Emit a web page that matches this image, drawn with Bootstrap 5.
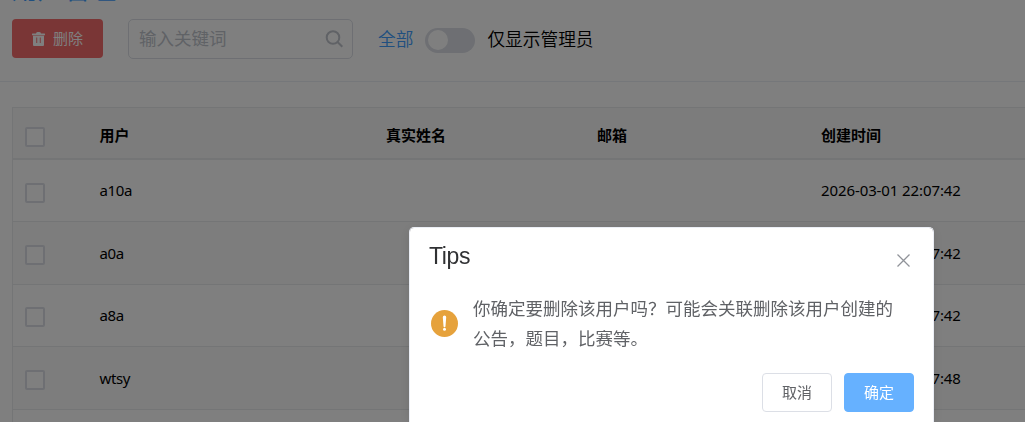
<!DOCTYPE html>
<html lang="zh-CN">
<head>
    <meta charset="UTF-8">
    <meta name="viewport" content="width=device-width, initial-scale=1.0">
    <title>用户管理</title>
    <link href="https://cdn.jsdelivr.net/npm/bootstrap@5.3.2/dist/css/bootstrap.min.css" rel="stylesheet">
    <style>
        body {
            font-family: "Noto Sans", "Noto Sans CJK SC", sans-serif;
            font-size: 15px;
            color: #000;
            height: 422px;
            overflow: hidden;
        }
        .panel-head {
            height: 82px;
            overflow: hidden;
            border-bottom: 1px solid #ebeef5;
            padding-left: 12px;
        }
        .panel-title {
            font-family: "Noto Sans CJK SC", sans-serif;
            font-size: 26px;
            font-weight: 400;
            line-height: 30px;
            margin: -27px 0 16px;
            color: #409eff;
        }
        .btn-del {
            width: 91px;
            height: 39px;
            margin-right: 25px;
            padding: 0;
            font-size: 15px;
            border-radius: 4px;
            color: #fff;
            background-color: #f56c6c;
        }
        .search-box {
            width: 225px;
            height: 40px;
            margin-right: 25px;
            padding: 0 8px 2px 10px;
            border: 1px solid #dcdfe6;
            border-radius: 5px;
            font-size: 17.5px;
            color: #c0c4cc;
        }
        .switch-label {
            font-size: 17.7px;
            font-weight: 350;
            line-height: 40px;
        }
        .switch-label.all {
            color: #409eff;
        }
        .switch-core {
            width: 50px;
            height: 25px;
            margin: 2px 12px 0;
            padding: 2px 3px;
            border-radius: 13px;
            background-color: #dcdfe6;
        }
        .switch-knob {
            width: 20px;
            height: 20px;
            border-radius: 50%;
            background-color: #fff;
        }
        .user-table {
            margin: 25px 0 0 12px;
            border-top: 1px solid #e8eaec;
            border-left: 1px solid #e8eaec;
        }
        .user-row {
            height: 62.4px;
            border-bottom: 1px solid #e8eaec;
            background-color: #fff;
        }
        .user-row.striped {
            background-color: #fafafa;
        }
        .user-row.head {
            height: 52px;
            padding-top: 4px;
            border-bottom: 2px solid #e8eaec;
            background-color: #f8f8f9;
            font-weight: 700;
        }
        .user-row.last {
            height: 13px;
            border-bottom: 0;
        }
        .cell-check { width: 86.5px; padding: 4px 0 0 12px; }
        .cell-name { width: 286.5px; letter-spacing: -.4px; }
        .head .cell-name { letter-spacing: 0; }
        .cell-real { width: 211px; }
        .cell-mail { width: 224px; }
        .cell-time { letter-spacing: -.1px; }
        .check-inner {
            display: block;
            width: 20px;
            height: 20px;
            border: 2px solid #dcdfe6;
            border-radius: 2px;
            background-color: #fff;
        }
        .tips-dialog {
            width: 525px;
            max-width: 525px;
            margin: 227px 0 0 409px;
        }
        .tips-content {
            height: 195px;
            border: 1px solid #ebeef5;
            border-bottom: 0;
            border-radius: 5px 5px 0 0;
            box-shadow: 0 2px 12px rgba(0,0,0,0.1);
            color: #606266;
        }
        .tips-head {
            padding: 14px 23px 0 19px;
        }
        .tips-title {
            font-family: "Liberation Sans", sans-serif;
            font-size: 23px;
            font-weight: 400;
            line-height: 28px;
            letter-spacing: -.4px;
            color: #303133;
        }
        .tips-close {
            margin-top: 10px;
            overflow: visible;
        }
        .tips-body {
            padding: 23px 34px 0 21px;
        }
        .tips-text {
            font-family: "Noto Sans CJK SC", sans-serif;
            font-size: 17.5px;
            line-height: 30px;
            padding-left: 15px;
        }
        .tips-foot {
            padding: 20px 19px 0 0;
            gap: 12px;
        }
        .btn-tips {
            width: 70px;
            height: 39px;
            padding: 0;
            font-size: 15px;
            border-radius: 4px;
            border: 1px solid #dcdfe6;
            color: #606266;
        }
        .btn-tips.ok {
            color: #fff;
            background-color: #66b1ff;
            border-color: #66b1ff;
        }
    </style>
</head>
<body>
    <div class="panel-head">
        <h1 class="panel-title">用户管理</h1>
        <div class="d-flex">
            <button class="btn btn-del d-flex align-items-center justify-content-center">
                <svg width="13" height="14" viewBox="0 0 13 14" class="me-2" fill="#fff">
                    <path fill-rule="evenodd" d="M4 1.500Q4 0 5.500 0h2Q9 0 9 1.500h3.500q.5 0 .5.500v1.200H0V2q0-.5.5-.5zM1 3.800h11V13q0 1-1 1H2q-1 0-1-1zM4.300 5.500v5.500h.9V5.500zM7.800 5.500v5.500h.9V5.500z"/>
                </svg>
                删除
            </button>
            <div class="search-box d-flex align-items-center justify-content-between">
                <span>输入关键词</span>
                <svg width="19" height="19" viewBox="0 0 19 19" fill="none" stroke="#c0c4cc" stroke-width="2">
                    <circle cx="8" cy="8.500" r="6.300"/>
                    <path d="M12.500 13l4.800 4.800"/>
                </svg>
            </div>
            <div class="d-flex align-items-center">
                <span class="switch-label all">全部</span>
                <span class="switch-core"><span class="switch-knob d-block"></span></span>
                <span class="switch-label">仅显示管理员</span>
            </div>
        </div>
    </div>

    <div class="user-table">
        <div class="user-row head d-flex align-items-center">
            <div class="cell-check"><span class="check-inner"></span></div>
            <div class="cell-name">用户</div>
            <div class="cell-real">真实姓名</div>
            <div class="cell-mail">邮箱</div>
            <div>创建时间</div>
        </div>
        <div class="user-row d-flex align-items-center">
            <div class="cell-check"><span class="check-inner"></span></div>
            <div class="cell-name">a10a</div>
            <div class="cell-real"></div>
            <div class="cell-mail"></div>
            <div class="cell-time">2026-03-01 22:07:42</div>
        </div>
        <div class="user-row striped d-flex align-items-center">
            <div class="cell-check"><span class="check-inner"></span></div>
            <div class="cell-name">a0a</div>
            <div class="cell-real"></div>
            <div class="cell-mail"></div>
            <div class="cell-time">2026-03-01 22:07:42</div>
        </div>
        <div class="user-row d-flex align-items-center">
            <div class="cell-check"><span class="check-inner"></span></div>
            <div class="cell-name">a8a</div>
            <div class="cell-real"></div>
            <div class="cell-mail"></div>
            <div class="cell-time">2026-03-01 22:07:42</div>
        </div>
        <div class="user-row striped d-flex align-items-center">
            <div class="cell-check"><span class="check-inner"></span></div>
            <div class="cell-name">wtsy</div>
            <div class="cell-real"></div>
            <div class="cell-mail"></div>
            <div class="cell-time">2026-03-01 22:07:48</div>
        </div>
        <div class="user-row last"></div>
    </div>

    <div class="modal-backdrop show"></div>
    <div class="modal d-block overflow-hidden" tabindex="-1">
        <div class="modal-dialog tips-dialog">
            <div class="modal-content tips-content">
                <div class="tips-head d-flex justify-content-between">
                    <div class="tips-title">Tips</div>
                    <svg width="13" height="13" viewBox="0 0 13 13" class="tips-close" stroke="#909399" stroke-width="1.300">
                        <path d="M.5 2.500l12 12M12.500 2.500l-12 12"/>
                    </svg>
                </div>
                <div class="tips-body d-flex align-items-center">
                    <svg width="27" height="27" viewBox="0 0 27 27" class="flex-shrink-0">
                        <circle cx="13.500" cy="13.500" r="13.500" fill="#e6a23c"/>
                        <path d="M11.800 7.300a1.700 1.700 0 0 1 3.400 0L14.500 16.300a1 1 0 0 1-2 0z" fill="#fff"/>
                        <circle cx="13.500" cy="19.300" r="1.500" fill="#fff"/>
                    </svg>
                    <div class="tips-text">你确定要删除该用户吗？可能会关联删除该用户创建的公告，题目，比赛等。</div>
                </div>
                <div class="tips-foot d-flex justify-content-end">
                    <button class="btn btn-tips">取消</button>
                    <button class="btn btn-tips ok">确定</button>
                </div>
            </div>
        </div>
    </div>

    <script src="https://cdn.jsdelivr.net/npm/bootstrap@5.3.2/dist/js/bootstrap.bundle.min.js"></script>
</body>
</html>
